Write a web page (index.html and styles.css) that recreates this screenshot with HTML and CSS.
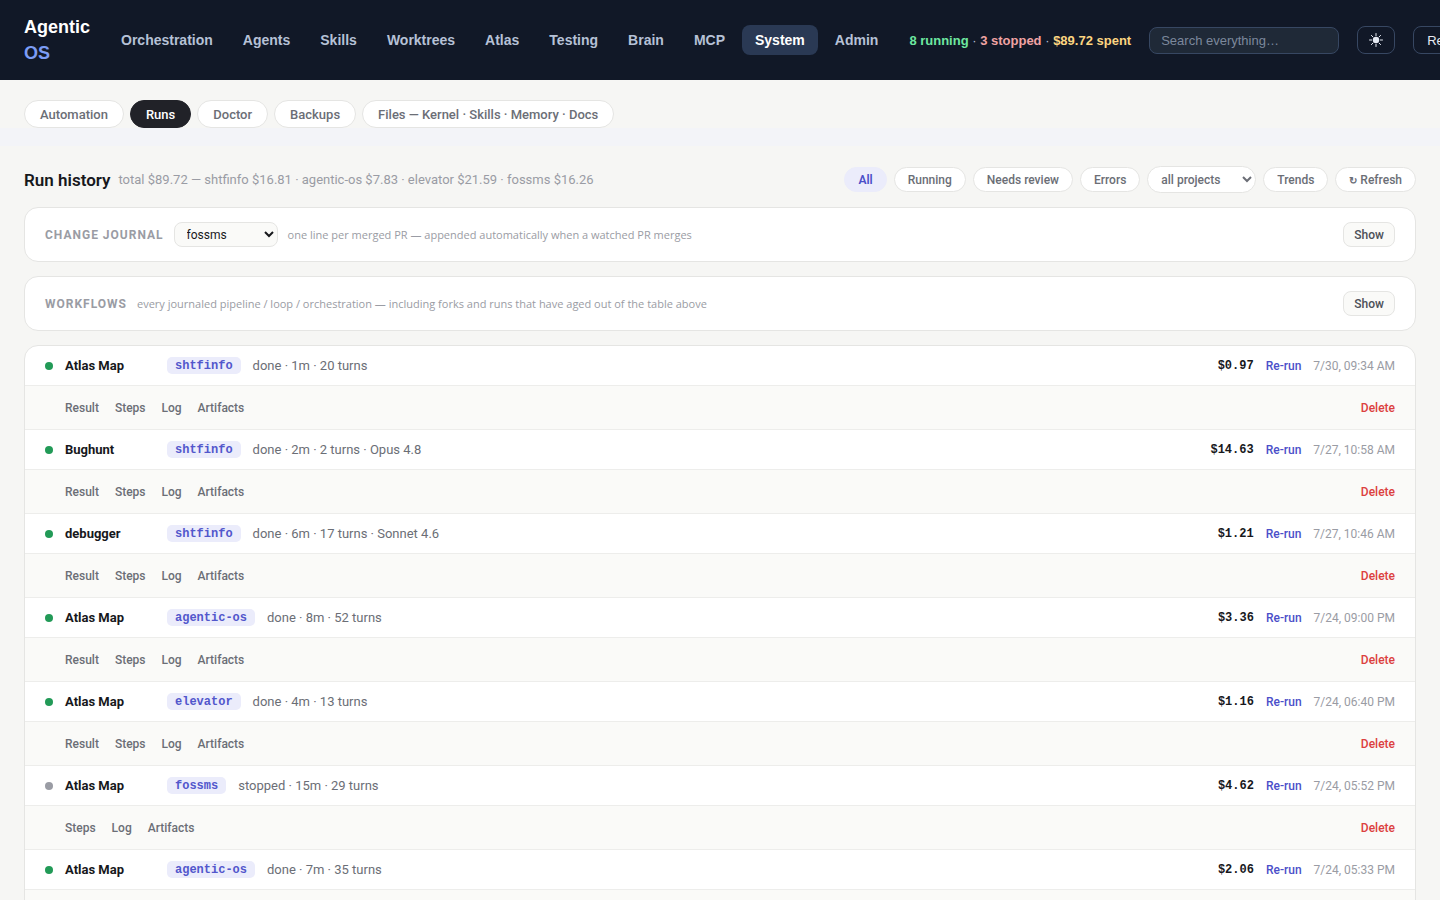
FILE: index.html
```html
<!DOCTYPE html>
<html lang="en">

<head>
    <meta charset="utf-8">
    <title>Agentic OS</title>
    <link rel="stylesheet" href="styles.css">
</head>

<body>

    <header class="topbar">
        <div class="brand">Agentic <span>OS</span></div>
        <nav class="nav">
            <a href="#">Orchestration</a>
            <a href="#">Agents</a>
            <a href="#">Skills</a>
            <a href="#">Worktrees</a>
            <a href="#">Atlas</a>
            <a href="#">Testing</a>
            <a href="#">Brain</a>
            <a href="#">MCP</a>
            <a href="#" class="active">System</a>
            <a href="#">Admin</a>
        </nav>
        <div class="stats"><b class="running">8 running</b> · <b class="stopped">3 stopped</b> · <b class="spent">$89.72 spent</b></div>
        <input class="search" type="text" placeholder="Search everything…" aria-label="Search everything">
        <button class="top-btn" aria-label="Theme">
            <svg width="14" height="14" viewBox="0 0 14 14" fill="none" stroke="currentColor" stroke-linecap="round">
                <circle cx="7" cy="7" r="3.2" fill="currentColor" stroke="none" />
                <path d="M7 .5v2.2M7 11.3v2.2M.5 7h2.2M11.3 7h2.2M2.4 2.4l1.5 1.5M10.1 10.1l1.5 1.5M2.4 11.6l1.5-1.5M10.1 3.9l1.5-1.5" />
            </svg>
        </button>
        <button class="top-btn">Refresh</button>
    </header>

    <nav class="subtabs">
        <button class="tab">Automation</button>
        <button class="tab active">Runs</button>
        <button class="tab">Doctor</button>
        <button class="tab">Backups</button>
        <button class="tab">Files — Kernel · Skills · Memory · Docs</button>
    </nav>

    <main class="page">
        <div class="page-head">
            <h1>Run history</h1>
            <span class="totals">total $89.72 — shtfinfo $16.81 · agentic-os $7.83 · elevator $21.59 · fossms $16.26</span>
            <div class="filters">
                <button class="pill active">All</button>
                <button class="pill">Running</button>
                <button class="pill">Needs review</button>
                <button class="pill">Errors</button>
                <select class="pill project" aria-label="Project">
                    <option>all projects</option>
                </select>
                <button class="pill">Trends</button>
                <button class="pill"><span class="reload">↻</span> Refresh</button>
            </div>
        </div>

        <section class="card strip">
            <h2>Change journal</h2>
            <select class="journal" aria-label="Journal project">
                <option>fossms</option>
            </select>
            <span class="hint">one line per merged PR — appended automatically when a watched PR merges</span>
            <button class="show">Show</button>
        </section>

        <section class="card strip">
            <h2>Workflows</h2>
            <span class="hint">every journaled pipeline / loop / orchestration — including forks and runs that have aged out of the table above</span>
            <button class="show">Show</button>
        </section>

        <section class="card runs">
            <div class="run">
                <i class="dot"></i><b class="name">Atlas Map</b><span class="tag">shtfinfo</span>
                <span class="meta">done · 1m · 20 turns</span>
                <span class="cost">$0.97</span><button class="link rerun">Re-run</button><time>7/30, 09:34 AM</time>
            </div>
            <div class="actions">
                <button class="link">Result</button><button class="link">Steps</button><button class="link">Log</button><button class="link">Artifacts</button>
                <button class="link delete">Delete</button>
            </div>

            <div class="run">
                <i class="dot"></i><b class="name">Bughunt</b><span class="tag">shtfinfo</span>
                <span class="meta">done · 2m · 2 turns · Opus 4.8</span>
                <span class="cost">$14.63</span><button class="link rerun">Re-run</button><time>7/27, 10:58 AM</time>
            </div>
            <div class="actions">
                <button class="link">Result</button><button class="link">Steps</button><button class="link">Log</button><button class="link">Artifacts</button>
                <button class="link delete">Delete</button>
            </div>

            <div class="run">
                <i class="dot"></i><b class="name">debugger</b><span class="tag">shtfinfo</span>
                <span class="meta">done · 6m · 17 turns · Sonnet 4.6</span>
                <span class="cost">$1.21</span><button class="link rerun">Re-run</button><time>7/27, 10:46 AM</time>
            </div>
            <div class="actions">
                <button class="link">Result</button><button class="link">Steps</button><button class="link">Log</button><button class="link">Artifacts</button>
                <button class="link delete">Delete</button>
            </div>

            <div class="run">
                <i class="dot"></i><b class="name">Atlas Map</b><span class="tag">agentic-os</span>
                <span class="meta">done · 8m · 52 turns</span>
                <span class="cost">$3.36</span><button class="link rerun">Re-run</button><time>7/24, 09:00 PM</time>
            </div>
            <div class="actions">
                <button class="link">Result</button><button class="link">Steps</button><button class="link">Log</button><button class="link">Artifacts</button>
                <button class="link delete">Delete</button>
            </div>

            <div class="run">
                <i class="dot"></i><b class="name">Atlas Map</b><span class="tag">elevator</span>
                <span class="meta">done · 4m · 13 turns</span>
                <span class="cost">$1.16</span><button class="link rerun">Re-run</button><time>7/24, 06:40 PM</time>
            </div>
            <div class="actions">
                <button class="link">Result</button><button class="link">Steps</button><button class="link">Log</button><button class="link">Artifacts</button>
                <button class="link delete">Delete</button>
            </div>

            <div class="run">
                <i class="dot off"></i><b class="name">Atlas Map</b><span class="tag">fossms</span>
                <span class="meta">stopped · 15m · 29 turns</span>
                <span class="cost">$4.62</span><button class="link rerun">Re-run</button><time>7/24, 05:52 PM</time>
            </div>
            <div class="actions">
                <button class="link">Steps</button><button class="link">Log</button><button class="link">Artifacts</button>
                <button class="link delete">Delete</button>
            </div>

            <div class="run">
                <i class="dot"></i><b class="name">Atlas Map</b><span class="tag">agentic-os</span>
                <span class="meta">done · 7m · 35 turns</span>
                <span class="cost">$2.06</span><button class="link rerun">Re-run</button><time>7/24, 05:33 PM</time>
            </div>
            <div class="actions"></div>
        </section>
    </main>

</body>

</html>
```
FILE: styles.css
```css
* {
    box-sizing: border-box;
}

body {
    margin: 0;
    background: #f3f4f8;
    color: #17181c;
    font-family: Roboto, "Noto Sans", sans-serif;
    font-size: 13px;
}

button,
select,
input {
    font-family: inherit;
    margin: 0;
}

button {
    cursor: pointer;
    white-space: nowrap;
}

/* top bar */
.topbar {
    display: flex;
    align-items: center;
    gap: 18px;
    padding: 14px 24px;
    background: #111827;
    overflow: hidden;
    font-family: "Liberation Sans", Arial, sans-serif;
}

.brand {
    color: #fff;
    font-size: 18px;
    font-weight: 700;
    line-height: 26px;
}

.brand span {
    color: #7c9cf5;
}

.nav {
    display: flex;
    flex-shrink: 0;
    gap: 4px;
}

.nav a {
    padding: 0 13px;
    border-radius: 8px;
    color: #b6c1d6;
    font-size: 14px;
    font-weight: 700;
    line-height: 30px;
    text-decoration: none;
}

.nav a.active {
    background: #2a3954;
    color: #fff;
}

.stats {
    flex-shrink: 0;
    color: #b6c1d6;
    font-size: 13px;
    white-space: nowrap;
}

.running {
    color: #6ee7a0;
}

.stopped {
    color: #f0a3a3;
}

.spent {
    color: #fcd581;
}

.search {
    flex: 0 0 190px;
    width: 190px;
    height: 27px;
    padding: 0 11px;
    border: 1px solid #374762;
    border-radius: 8px;
    background: #1f2937;
    color: #fff;
    font-size: 13px;
}

.search::placeholder {
    color: #7c889c;
}

.top-btn {
    display: flex;
    flex-shrink: 0;
    align-items: center;
    height: 28px;
    padding: 0 11px;
    border: 1px solid #374762;
    border-radius: 8px;
    background: transparent;
    color: #e5e9f2;
    font-size: 13px;
}

.top-btn:last-child {
    padding: 0 13px;
}

/* sub tabs */
.subtabs {
    display: flex;
    gap: 6px;
    margin-bottom: 18px;
    padding: 20px 24px 0;
    background: #f6f6f4;
}

.tab {
    height: 28px;
    padding: 0 15px;
    border: 1px solid #e5e5e3;
    border-radius: 14px;
    background: #fff;
    color: #6b6e76;
    font-size: 13px;
    font-weight: 500;
}

.tab.active {
    border-color: #212228;
    background: #212228;
    color: #fff;
}

/* page */
.page {
    min-height: calc(100vh - 146px);
    padding: 20px 24px;
    background: #f6f6f4;
}

.page-head {
    display: flex;
    align-items: center;
    gap: 8px;
    margin-bottom: 14px;
}

h1 {
    margin: 0;
    font-size: 17px;
    font-weight: 600;
}

.totals {
    color: #9a9ca4;
    font-size: 13px;
}

.filters {
    display: flex;
    align-items: center;
    gap: 7px;
    margin-left: auto;
}

.pill {
    height: 25px;
    padding: 0 13px;
    border: 1px solid #e5e5e3;
    border-radius: 14px;
    background: #fff;
    color: #6b6e76;
    font-size: 12px;
    font-weight: 500;
}

.pill.active {
    border-color: #ebecfb;
    background: #ebecfb;
    color: #4b4fc9;
    font-weight: 600;
}

.pill.project {
    width: 109px;
    height: 27px;
    padding: 0 0 0 9px;
}

.reload {
    font-size: 10px;
    font-weight: 700;
}

.card {
    margin-bottom: 14px;
    border: 1px solid #e5e5e3;
    border-radius: 14px;
    background: #fff;
}

.strip {
    display: flex;
    align-items: center;
    gap: 10px;
    padding: 14px 20px;
}

h2 {
    margin: 0;
    color: #9a9ca4;
    font-size: 12px;
    font-weight: 700;
    letter-spacing: 1px;
    text-transform: uppercase;
}

.journal {
    width: 104px;
    height: 25px;
    padding: 0 0 0 8px;
    border: 1px solid #e5e5e3;
    border-radius: 8px;
    background: #fafaf8;
    color: #17181c;
    font-size: 12px;
}

.hint {
    color: #9a9ca4;
    font-family: "Open Sans", "Noto Sans", sans-serif;
    font-size: 11px;
}

.show {
    height: 25px;
    margin-left: auto;
    padding: 0 10px;
    border: 1px solid #e5e5e3;
    border-radius: 8px;
    background: #fafaf8;
    color: #4d5058;
    font-size: 12px;
    font-weight: 500;
}

/* runs */
.runs {
    overflow: hidden;
}

.run,
.actions {
    display: flex;
    align-items: center;
    padding: 0 20px;
    border-bottom: 1px solid #ededeb;
}

.run {
    gap: 12px;
    height: 40px;
}

.actions {
    gap: 16px;
    height: 44px;
    padding-left: 40px;
    background: #fafaf8;
}

.actions:last-child {
    border-bottom: none;
}

.dot {
    width: 8px;
    height: 8px;
    border-radius: 50%;
    background: #229a57;
}

.dot.off {
    background: #9a9ca4;
}

.name {
    min-width: 90px;
    font-size: 13px;
    font-weight: 700;
}

.tag {
    padding: 1px 8px 0;
    border-radius: 5px;
    background: #ebecfb;
    color: #5257cc;
    font-family: "Liberation Mono", monospace;
    font-size: 12px;
    font-weight: 700;
    line-height: 16px;
}

.meta {
    color: #6b6e76;
    font-size: 13px;
}

.cost {
    margin-left: auto;
    font-family: "Liberation Mono", monospace;
    font-size: 12px;
    font-weight: 700;
}

.link {
    padding: 0;
    border: none;
    background: none;
    color: #6b6e76;
    font-size: 12px;
    font-weight: 500;
}

.rerun {
    color: #4b4fc9;
}

.delete {
    margin-left: auto;
    color: #dc4040;
}

time {
    color: #9a9ca4;
    font-size: 12px;
}
```
